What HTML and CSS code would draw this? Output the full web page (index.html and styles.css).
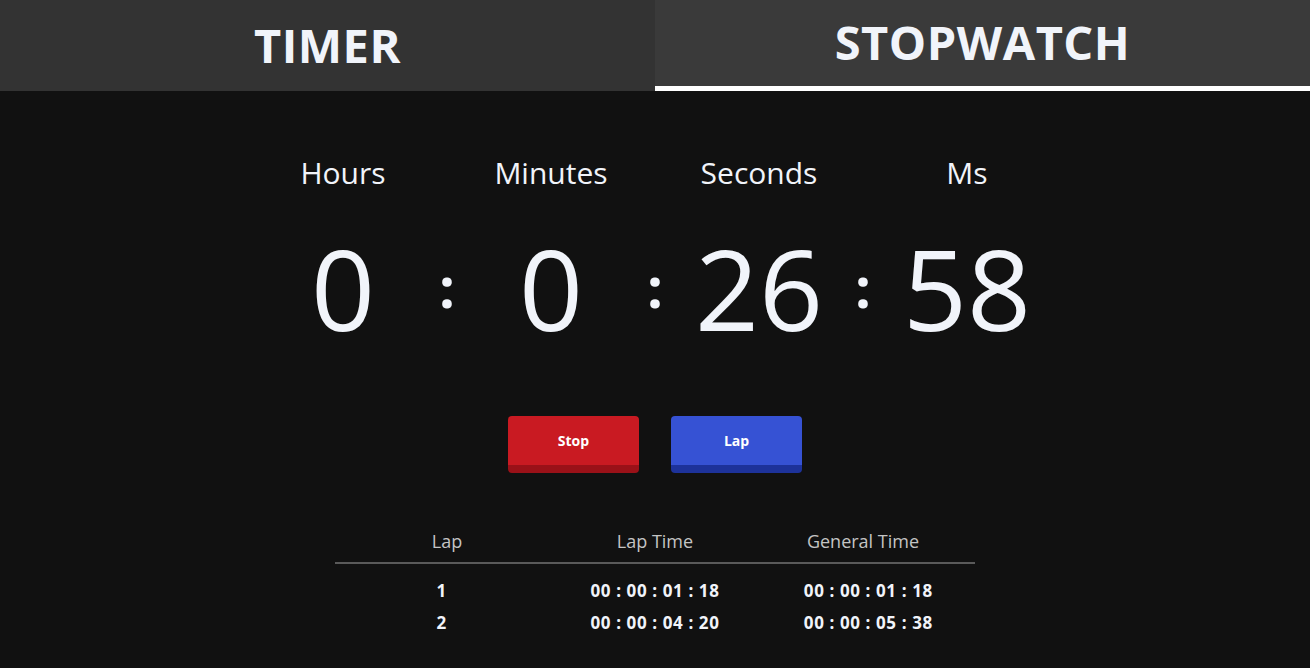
FILE: index.html
```html
<!DOCTYPE html>
<html lang="en">
<head>
<meta charset="utf-8">
<title>Stopwatch</title>
<link rel="stylesheet" href="styles.css">
</head>
<body>
<nav class="tabs">
  <div class="tab">TIMER</div>
  <div class="tab tab-active">STOPWATCH</div>
</nav>
<main class="main">
  <section class="clock">
    <div class="unit"><div class="unit-label">Hours</div><div class="unit-value">0</div></div>
    <div class="sep">:</div>
    <div class="unit"><div class="unit-label">Minutes</div><div class="unit-value">0</div></div>
    <div class="sep">:</div>
    <div class="unit"><div class="unit-label">Seconds</div><div class="unit-value">26</div></div>
    <div class="sep">:</div>
    <div class="unit"><div class="unit-label">Ms</div><div class="unit-value">58</div></div>
  </section>
  <div class="actions">
    <button class="btn btn-stop">Stop</button>
    <button class="btn btn-lap">Lap</button>
  </div>
  <section class="laps">
    <div class="laps-head">
      <div>Lap</div><div>Lap Time</div><div>General Time</div>
    </div>
    <div class="laps-rule"></div>
    <div class="laps-row"><div>1</div><div>00 : 00 : 01 : 18</div><div>00 : 00 : 01 : 18</div></div>
    <div class="laps-row"><div>2</div><div>00 : 00 : 04 : 20</div><div>00 : 00 : 05 : 38</div></div>
  </section>
</main>
</body>
</html>
```
FILE: styles.css
```css
* { box-sizing: border-box; }
html, body { margin: 0; padding: 0; }
body {
  background: #111111;
  color: #f1f4fa;
  font-family: "Open Sans", "Noto Sans", sans-serif;
  height: 668px;
  overflow: hidden;
}
.tabs {
  display: grid;
  grid-template-columns: 655px 655px;
  height: 91px;
}
.tab {
  background: #333333;
  display: flex;
  align-items: center;
  justify-content: center;
  font-weight: 700;
  font-size: 47px;
  letter-spacing: 0.5px;
  padding-bottom: 1px;
}
.tab-active {
  background: #3a3a3a;
  border-bottom: 5px solid #ffffff;
  padding-bottom: 2px;
}
.main {
  display: flex;
  flex-direction: column;
  align-items: center;
}
.clock {
  display: flex;
  margin-top: 62px;
}
.unit {
  width: 160px;
  display: flex;
  flex-direction: column;
  align-items: center;
}
.unit-label {
  font-size: 30px;
  line-height: 40px;
}
.unit-value {
  font-size: 112px;
  font-weight: 400;
  line-height: 150px;
  margin-top: 20px;
}
.sep {
  width: 48px;
  text-align: center;
  font-size: 56px;
  font-weight: 700;
  padding-top: 95px;
}
.actions {
  display: flex;
  gap: 32px;
  margin-top: 53px;
}
.btn {
  width: 131px;
  height: 57px;
  border: none;
  border-radius: 4px;
  color: #ffffff;
  font-family: inherit;
  font-weight: 700;
  font-size: 14px;
  padding: 0 0 1px;
}
.btn-stop { background: #c91a22; border-bottom: 8px solid #9a1118; }
.btn-lap { background: #3652d4; border-bottom: 8px solid #1d329a; }
.laps {
  width: 640px;
  margin-top: 57px;
  display: flex;
  flex-direction: column;
  align-items: center;
}
.laps-head {
  width: 624px;
  display: grid;
  grid-template-columns: repeat(3, 1fr);
  text-align: center;
  color: #c4c4c4;
  font-size: 18px;
  line-height: 22px;
}
.laps-rule {
  width: 640px;
  height: 2px;
  background: #5a5a5a;
  margin-top: 10px;
}
.laps-row {
  width: 640px;
  display: grid;
  grid-template-columns: repeat(3, 1fr);
  text-align: center;
  font-weight: 700;
  font-size: 17px;
  letter-spacing: 0.6px;
  line-height: 32px;
}
.laps-rule + .laps-row { margin-top: 11px; }
```
